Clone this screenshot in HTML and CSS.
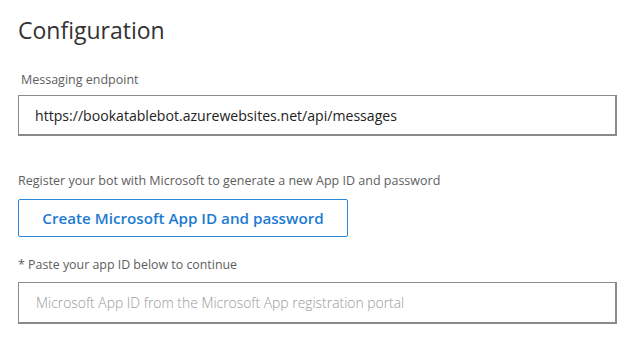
FILE: index.html
```html
<!DOCTYPE html>
<html>
<head>
<meta charset="utf-8">
<link rel="stylesheet" href="styles.css">
</head>
<body>
<div class="page">
  <h1 class="title">Configuration</h1>
  <div class="label label-endpoint">Messaging endpoint</div>
  <div class="field field-endpoint">https://bookatablebot.azurewebsites.net/api/messages</div>
  <div class="label label-register">Register your bot with Microsoft to generate a new App ID and password</div>
  <div class="btn">Create Microsoft App ID and password</div>
  <div class="label label-paste">* Paste your app ID below to continue</div>
  <div class="field field-appid placeholder">Microsoft App ID from the Microsoft App registration portal</div>
</div>
</body>
</html>
```
FILE: styles.css
```css
* { box-sizing: border-box; }
html, body { margin: 0; padding: 0; background: #ffffff; }
body { font-family: "Open Sans", "Noto Sans", sans-serif; color: #333333; }
.page { padding: 14px 0 0 18px; width: 643px; height: 341px; overflow: hidden; }
.title { margin: 0; font-weight: 400; font-size: 23px; line-height: 32px; color: #333333; }
.label { font-size: 12.5px; line-height: 18px; color: #5e5e5e; }
.label-endpoint { margin-top: 25px; padding-left: 3px; font-size: 12.5px; }
.field {
  width: 599px;
  border: 1px solid #8a8a8a;
  border-right-width: 2px;
  border-bottom-width: 2px;
  font-size: 14.1px;
  display: flex;
  align-items: center;
  padding-left: 16px;
  color: #222222;
}
.field-endpoint { margin-top: 6px; height: 41px; }
.label-register { margin-top: 36px; }
.btn {
  margin-top: 9px;
  width: 330px;
  height: 38px;
  border: 1.5px solid #2b88d8;
  border-radius: 2px;
  color: #1c7bd0;
  font-size: 15.2px;
  font-weight: 600;
  display: flex;
  align-items: center;
  justify-content: center;
}
.label-paste { margin-top: 19px; font-size: 12.4px; }
.field-appid { margin-top: 8px; height: 42px; padding-left: 17px; font-size: 13.9px; font-weight: 300; }
.placeholder { color: #9a9a9a; }
```
